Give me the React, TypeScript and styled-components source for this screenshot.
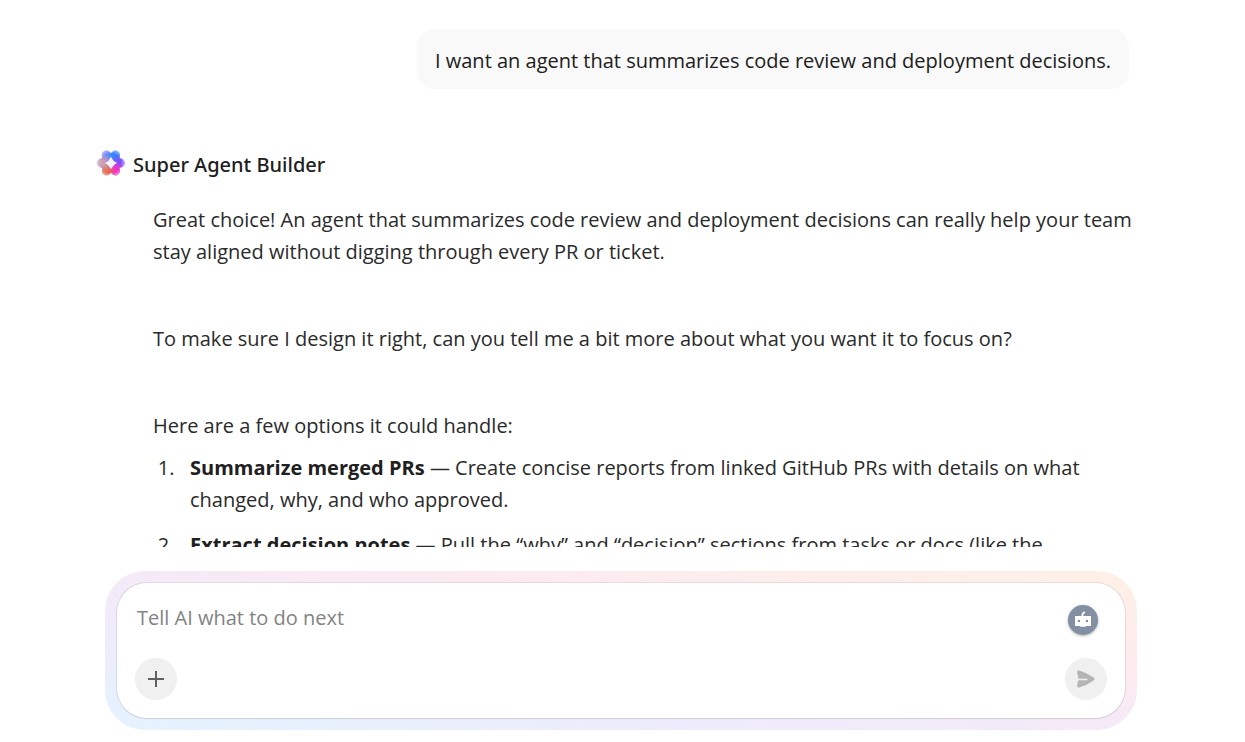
import React, { useState } from "react";
import styled, { createGlobalStyle } from "styled-components";

const GlobalStyle = createGlobalStyle`
  *, *::before, *::after { box-sizing: border-box; }
  body {
    margin: 0;
    background: #ffffff;
    color: #202020;
    font-family: "Segoe UI", "Open Sans", "Noto Sans", sans-serif;
    font-size: 20px;
    line-height: 32px;
  }
  button, textarea { font: inherit; }
`;

const Page = styled.main`
  display: flex;
  flex-direction: column;
  gap: 24px;
  height: 100vh;
  padding-bottom: 12px;
`;

const Thread = styled.section`
  flex: 1;
  min-height: 0;
  overflow: hidden;
  display: flex;
  flex-direction: column;
  padding: 29px 100px 0 97px;
`;

const UserBubble = styled.p`
  flex: none;
  align-self: flex-end;
  margin: 0 16px 0 0;
  padding: 16px 18px 12px;
  border-radius: 18px;
  background: #f9f9f9;
`;

const AgentMessage = styled.article`
  flex: none;
  margin-top: 60px;
`;

const AgentHeader = styled.header`
  display: flex;
  align-items: flex-start;
  gap: 8px;
`;

const AgentName = styled.h2`
  margin: 0;
  font-family: "Segoe UI", "Noto Sans", sans-serif;
  font-size: 20px;
  font-weight: 500;
`;

const AgentBody = styled.div`
  padding: 23px 0 0 56px;
  color: #2a2a2a;
`;

const Paragraph = styled.p<{ $tight?: boolean }>`
  margin: 0 0 ${(p) => (p.$tight ? 10 : 55)}px;
`;

const Options = styled.ol`
  margin: 0;
  padding: 0 0 0 37px;
`;

const Option = styled.li`
  margin-bottom: 13px;

  &::marker { content: counter(list-item) ".\\00a0\\00a0\\00a0"; }
  strong { font-weight: 700; color: #202020; }
`;

const Halo = styled.form`
  flex: none;
  margin: 0 108px 0 105px;
  padding: 12px;
  border-radius: 40px;
  background: linear-gradient(to top right, #e4f3ff 0%, #edecfc 28%, #f4eaf8 48%, #fceaf1 64%, #fff0e6 100%);
`;

const Composer = styled.div`
  display: flex;
  flex-direction: column;
  justify-content: space-between;
  height: 135px;
  padding: 18px;
  border-radius: 30px;
  background: #ffffff;
  box-shadow: 0 0 0 1px rgba(80, 80, 80, 0.12), 0 1px 1px rgba(80, 80, 80, 0.08);
`;

const Row = styled.div`
  display: flex;
  align-items: center;
  justify-content: space-between;
`;

const Prompt = styled.textarea`
  flex: 1;
  height: 32px;
  padding: 0 2px;
  border: 0;
  outline: 0;
  resize: none;
  overflow: hidden;
  background: transparent;
  color: #202020;

  &::placeholder { color: #838383; opacity: 1; }
`;

const RoundButton = styled.button`
  display: grid;
  place-items: center;
  width: 42px;
  height: 42px;
  padding: 0;
  border: 0;
  border-radius: 50%;
  background: #f0f0f0;
`;

const BotButton = styled(RoundButton)`
  width: 30px;
  height: 30px;
  margin: 4px 9px 0 0;
  background: #838fa3;
  box-shadow: 0 1px 3px rgba(0, 0, 0, 0.3);
`;

const petals = [
  { angle: -30, x: 9, y: 6, color: "#6f8cf6" },
  { angle: 30, x: 19, y: 6, color: "#2b8aff" },
  { angle: 90, x: 23, y: 14, color: "#7d4cff" },
  { angle: 150, x: 19, y: 22, color: "#fa2cc8" },
  { angle: 210, x: 9, y: 22, color: "#ee683c" },
  { angle: 270, x: 5, y: 14, color: "#cf9fb4" },
];

function AgentLogo() {
  return (
    <svg width="28" height="28" viewBox="0 0 28 28" aria-hidden="true">
      <defs>
        {petals.map((p, i) => (
          <radialGradient id={`petal${i}`} key={i} gradientUnits="userSpaceOnUse" cx={p.x} cy={p.y} r="10">
            <stop offset="0.2" stopColor={p.color} />
            <stop offset="1" stopColor={p.color} stopOpacity="0" />
          </radialGradient>
        ))}
        <radialGradient id="edge" gradientUnits="userSpaceOnUse" cx="14" cy="14" r="14">
          <stop offset="0.7" stopColor="#fff" stopOpacity="0" />
          <stop offset="1" stopColor="#fff" stopOpacity="0.5" />
        </radialGradient>
        <clipPath id="flower">
          {petals.map((p, i) => (
            <ellipse key={i} cx="14" cy="6.5" rx="4.9" ry="6.2" transform={`rotate(${p.angle} 14 14)`} />
          ))}
          <circle cx="14" cy="14" r="7" />
        </clipPath>
      </defs>
      <g clipPath="url(#flower)">
        <rect width="28" height="28" fill="#9c7be6" />
        {petals.map((p, i) => (
          <circle key={i} cx={p.x} cy={p.y} r="10" fill={`url(#petal${i})`} />
        ))}
        <rect width="28" height="28" fill="url(#edge)" />
      </g>
      <path d="M14 8Q15.8 12.2 20 14Q15.8 15.8 14 20Q12.2 15.8 8 14Q12.2 12.2 14 8Z" fill="#f4f4ff" />
    </svg>
  );
}

function PlusIcon() {
  return (
    <svg width="18" height="18" viewBox="0 0 18 18" aria-hidden="true">
      <path d="M9 1v16M1 9h16" stroke="#606060" strokeWidth="2" />
    </svg>
  );
}

function BotIcon() {
  return (
    <svg width="18" height="18" viewBox="0 0 18 18" aria-hidden="true">
      <path d="M8.2 5.5C8.2 3.2 9 1.8 10.8 1" fill="none" stroke="#fff" strokeWidth="1.8" />
      <path
        fill="#fff"
        fillRule="evenodd"
        d="M1 5h16v10h-4.6l-1 .8H6.6l-1-.8H1zM5 8.8a1.2 1.2 0 1 0 0 2.4a1.2 1.2 0 1 0 0-2.4zM13 8.8a1.2 1.2 0 1 0 0 2.4a1.2 1.2 0 1 0 0-2.4z"
      />
    </svg>
  );
}

function SendIcon() {
  return (
    <svg width="18" height="18" viewBox="0 0 18 18" aria-hidden="true">
      <path
        fill="#b5b5b5"
        d="M0 2C0 .8 1 .2 2.2 .6Q10.5 3 16.6 7.6Q18.4 9 16.6 10.4Q10.5 15 2.2 17.4Q0 17.8 0 16L1.2 10.2H10.5V8.8H1.6Z"
      />
    </svg>
  );
}

export default function App() {
  const [text, setText] = useState("");
  return (
    <>
      <GlobalStyle />
      <Page>
        <Thread>
          <UserBubble>I want an agent that summarizes code review and deployment decisions.</UserBubble>
          <AgentMessage>
            <AgentHeader>
              <AgentLogo />
              <AgentName>Super Agent Builder</AgentName>
            </AgentHeader>
            <AgentBody>
              <Paragraph>
                Great choice! An agent that summarizes code review and deployment decisions can really help your team
                stay aligned without digging through every PR or ticket.
              </Paragraph>
              <Paragraph>To make sure I design it right, can you tell me a bit more about what you want it to focus on?</Paragraph>
              <Paragraph $tight>Here are a few options it could handle:</Paragraph>
              <Options>
                <Option>
                  <strong>Summarize merged PRs</strong> — Create concise reports from linked GitHub PRs with details on what
                  changed, why, and who approved.
                </Option>
                <Option>
                  <strong>Extract decision notes</strong> — Pull the “why” and “decision” sections from tasks or docs (like the
                </Option>
              </Options>
            </AgentBody>
          </AgentMessage>
        </Thread>
        <Halo onSubmit={(e) => e.preventDefault()}>
          <Composer>
            <Row>
              <Prompt
                aria-label="Message"
                placeholder="Tell AI what to do next"
                value={text}
                onChange={(e) => setText(e.target.value)}
              />
              <BotButton type="button" aria-label="Choose agent">
                <BotIcon />
              </BotButton>
            </Row>
            <Row>
              <RoundButton type="button" aria-label="Add">
                <PlusIcon />
              </RoundButton>
              <RoundButton type="submit" aria-label="Send">
                <SendIcon />
              </RoundButton>
            </Row>
          </Composer>
        </Halo>
      </Page>
    </>
  );
}
